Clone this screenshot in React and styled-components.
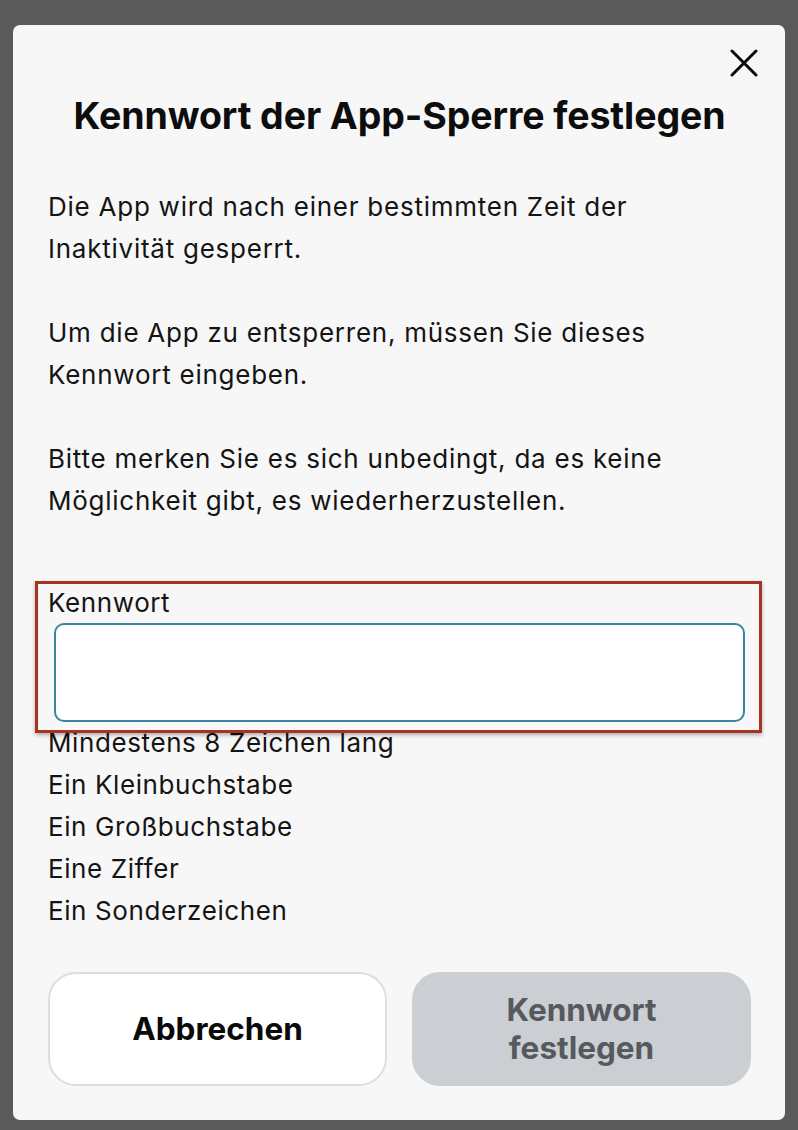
import React, { useState } from 'react';
import styled, { createGlobalStyle } from 'styled-components';

const GlobalStyle = createGlobalStyle`
  html, body {
    margin: 0;
    padding: 0;
    background: #5a5a5a;
  }
  body {
    font-family: Inter, "Noto Sans", "Liberation Sans", sans-serif;
    color: #111111;
  }
`;

const Page = styled.div`
  width: 798px;
  height: 1130px;
  padding: 25px 13px 10px 13px;
  box-sizing: border-box;
`;

const Modal = styled.div`
  height: 1095px;
  box-sizing: border-box;
  background: #f7f7f7;
  border-radius: 7px;
  padding: 22px 34px 34px 35px;
  display: flex;
  flex-direction: column;
`;

const CloseRow = styled.div`
  display: flex;
  justify-content: flex-end;
  height: 32px;
`;

const CloseButton = styled.button`
  border: 0;
  background: transparent;
  padding: 0;
  width: 32px;
  height: 32px;
  margin-right: -9px;
  display: flex;
  align-items: center;
  justify-content: center;
  cursor: pointer;
`;

const Title = styled.h1`
  margin: 14px -20px 0 -20px;
  font-size: 37.5px;
  font-weight: 700;
  text-align: center;
  line-height: 46px;
  letter-spacing: -0.1px;
  color: #0d0d0d;
`;

const Body = styled.div`
  margin-top: 47px;
`;

const Paragraph = styled.p`
  margin: 0 0 42px 0;
  font-size: 26px;
  line-height: 42px;
  letter-spacing: 0.75px;
  color: #141414;
`;

const Field = styled.div`
  position: relative;
  margin-top: 18px;
`;

const Label = styled.label`
  display: block;
  font-size: 26px;
  line-height: 41px;
  letter-spacing: 0.6px;
  color: #141414;
`;

const Input = styled.input`
  display: block;
  box-sizing: border-box;
  width: 691px;
  height: 99px;
  margin: 0 0 0 6px;
  border: 2px solid #3a84a0;
  border-radius: 10px;
  background: #ffffff;
  font-size: 24px;
  padding: 0 16px;
  outline: none;
`;

const Highlight = styled.div`
  position: absolute;
  left: -13px;
  top: -1px;
  width: 727px;
  height: 152px;
  box-sizing: border-box;
  border: 3px solid #a83222;
  box-shadow: 0 2px 4px rgba(0, 0, 0, 0.3);
  pointer-events: none;
`;

const Rules = styled.ul`
  list-style: none;
  margin: 0;
  padding: 0;
`;

const Rule = styled.li`
  font-size: 26px;
  line-height: 42px;
  letter-spacing: 0.6px;
  color: #141414;
`;

const Actions = styled.div`
  margin-top: auto;
  display: grid;
  grid-template-columns: 1fr 1fr;
  gap: 25px;
`;

const Button = styled.button`
  height: 114px;
  box-sizing: border-box;
  border-radius: 28px;
  font-family: Inter, "Noto Sans", "Liberation Sans", sans-serif;
  font-size: 31.5px;
  font-weight: 700;
  line-height: 38px;
  padding: 0 30px;
  border: 2px solid ${({ $primary }) => ($primary ? '#cbced2' : '#dcdee2')};
  background: ${({ $primary }) => ($primary ? '#cbced2' : '#ffffff')};
  color: ${({ $primary }) => ($primary ? '#56595e' : '#0a0a0a')};
`;

const rules = [
  'Mindestens 8 Zeichen lang',
  'Ein Kleinbuchstabe',
  'Ein Großbuchstabe',
  'Eine Ziffer',
  'Ein Sonderzeichen',
];

const App = () => {
  const [password, setPassword] = useState('');

  return (
    <Page>
      <GlobalStyle />
      <Modal>
        <CloseRow>
          <CloseButton aria-label="Schließen">
            <svg width="28" height="28" viewBox="0 0 28 28">
              <path d="M2 2 L26 26 M26 2 L2 26" stroke="#0a0a0a" strokeWidth="3" strokeLinecap="round" />
            </svg>
          </CloseButton>
        </CloseRow>

        <Title>Kennwort der App-Sperre festlegen</Title>

        <Body>
          <Paragraph>
            Die App wird nach einer bestimmten Zeit der Inaktivität gesperrt.
          </Paragraph>
          <Paragraph>
            Um die App zu entsperren, müssen Sie dieses Kennwort eingeben.
          </Paragraph>
          <Paragraph>
            Bitte merken Sie es sich unbedingt, da es keine Möglichkeit gibt, es wiederherzustellen.
          </Paragraph>
        </Body>

        <Field>
          <Label htmlFor="pw">Kennwort</Label>
          <Input
            id="pw"
            type="password"
            value={password}
            onChange={(e) => setPassword(e.target.value)}
          />
          <Highlight />
        </Field>

        <Rules>
          {rules.map((rule) => (
            <Rule key={rule}>{rule}</Rule>
          ))}
        </Rules>

        <Actions>
          <Button>Abbrechen</Button>
          <Button $primary disabled>
            Kennwort
            <br />
            festlegen
          </Button>
        </Actions>
      </Modal>
    </Page>
  );
};

export default App;
